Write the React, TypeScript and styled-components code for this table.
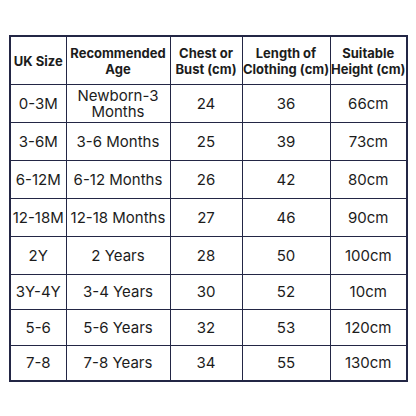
import React from "react";
import styled, { createGlobalStyle } from "styled-components";

const Global = createGlobalStyle`
  html, body { margin: 0; padding: 0; background: #ffffff; }
  body { font-family: "Inter", "Open Sans", sans-serif; color: #1c1c1c; }
`;

const Page = styled.div`
  width: 416px;
  height: 416px;
  padding: 35px 0 0 9px;
  box-sizing: border-box;
`;

const Table = styled.table`
  border-collapse: collapse;
  table-layout: fixed;
  width: 397px;
  border: 2px solid #232645;
`;

const Head = styled.th`
  border: 1.5px solid #232645;
  height: 47px;
  padding: 0;
  font-size: 13px;
  font-weight: 700;
  line-height: 16px;
  text-align: center;
  letter-spacing: 0;
`;

const Cell = styled.td<{ $h: number }>`
  border: 1.5px solid #232645;
  height: ${(p) => p.$h}px;
  padding: 0;
  font-size: 15px;
  font-weight: 400;
  line-height: 16px;
  text-align: center;
  letter-spacing: 0;
`;

const cols = [56, 104, 72, 88, 77];
const headers = ["UK Size", "Recommended Age", "Chest or Bust (cm)", "Length of Clothing (cm)", "Suitable Height (cm)"];
const rows: [string, string, string, string, string, number][] = [
  ["0-3M", "Newborn-3 Months", "24", "36", "66cm", 37],
  ["3-6M", "3-6 Months", "25", "39", "73cm", 37],
  ["6-12M", "6-12 Months", "26", "42", "80cm", 37],
  ["12-18M", "12-18 Months", "27", "46", "90cm", 37],
  ["2Y", "2 Years", "28", "50", "100cm", 37],
  ["3Y-4Y", "3-4 Years", "30", "52", "10cm", 34],
  ["5-6", "5-6 Years", "32", "53", "120cm", 35],
  ["7-8", "7-8 Years", "34", "55", "130cm", 34],
];

export default function App() {
  return (
    <Page>
      <Global />
      <Table>
        <colgroup>
          {cols.map((w, i) => (
            <col key={i} style={{ width: w }} />
          ))}
        </colgroup>
        <thead>
          <tr>
            {headers.map((h) => (
              <Head key={h}>{h}</Head>
            ))}
          </tr>
        </thead>
        <tbody>
          {rows.map((r) => (
            <tr key={r[0]}>
              {r.slice(0, 5).map((c, i) => (
                <Cell key={i} $h={r[5] as number}>{c}</Cell>
              ))}
            </tr>
          ))}
        </tbody>
      </Table>
    </Page>
  );
}
